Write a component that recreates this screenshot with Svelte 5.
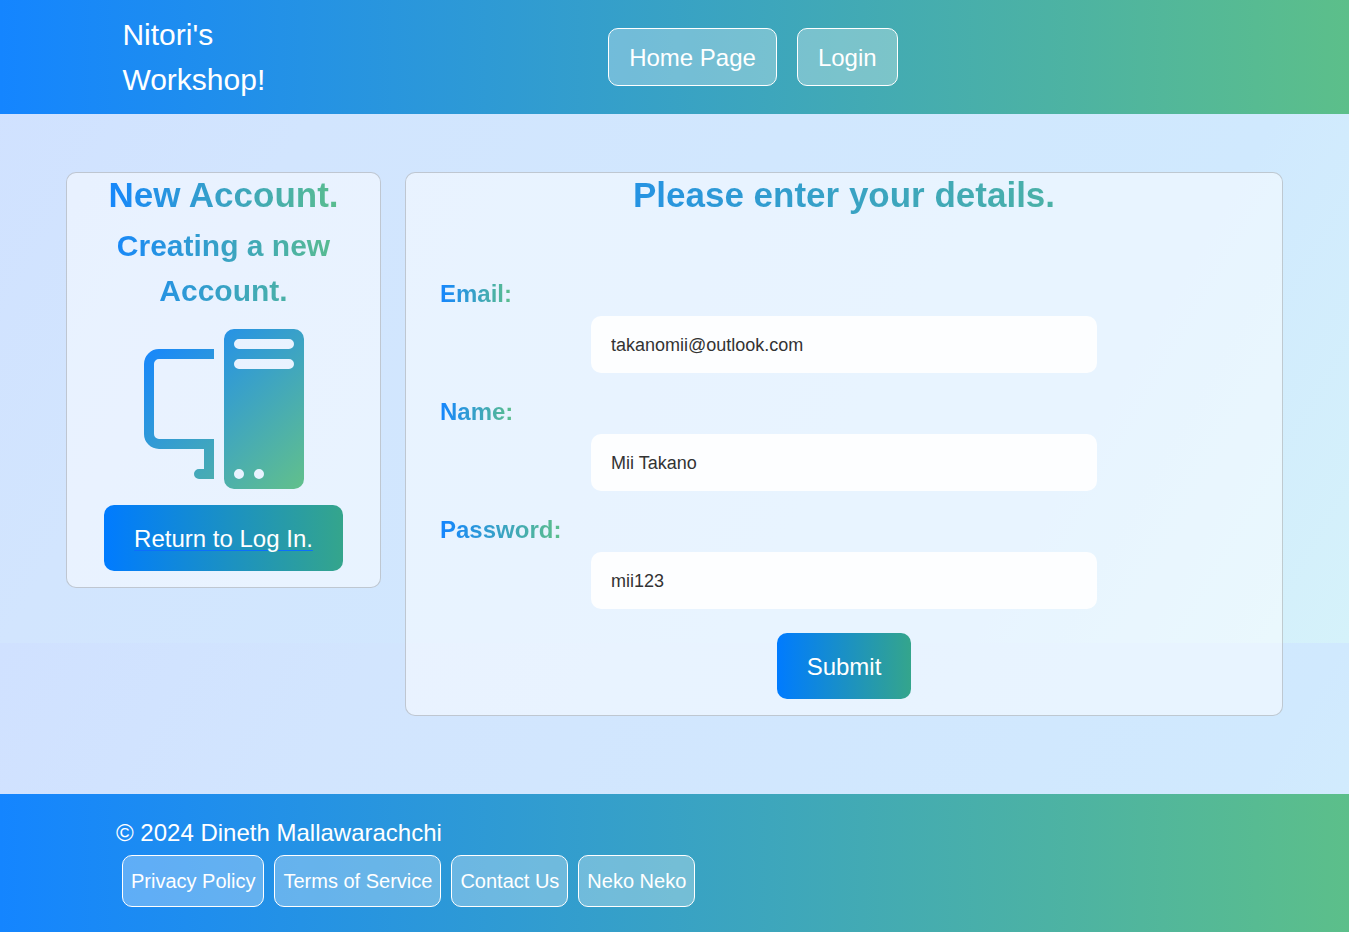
<script>
  const fields = $state([
    { id: 'email', label: 'Email:', type: 'email', value: 'takanomii@outlook.com' },
    { id: 'name', label: 'Name:', type: 'text', value: 'Mii Takano' },
    { id: 'password', label: 'Password:', type: 'text', value: 'mii123' }
  ]);
  const links = ['Privacy Policy', 'Terms of Service', 'Contact Us', 'Neko Neko'];
</script>

<div class="page">
  <header class="bar top">
    <a class="brand" href="#home">Nitori's Workshop!</a>
    <nav class="menu">
      <a class="pill large" href="#home">Home Page</a>
      <a class="pill large" href="#login">Login</a>
    </nav>
  </header>

  <main>
    <section class="card side">
      <h1 class="tint">New Account.</h1>
      <h2 class="tint">Creating a new Account.</h2>
      <svg viewBox="0 0 16 16" aria-hidden="true">
        <defs>
          <linearGradient id="device" gradientUnits="userSpaceOnUse" x1="0" y1="0" x2="16" y2="16">
            <stop offset="0" stop-color="#1485ff" />
            <stop offset="0.1" stop-color="#1a89f8" />
            <stop offset="1" stop-color="#62c08b" />
          </linearGradient>
        </defs>
        <path fill="url(#device)" fill-rule="evenodd" d="M9 0a1 1 0 0 0-1 1v14a1 1 0 0 0 1 1h6a1 1 0 0 0 1-1V1a1 1 0 0 0-1-1zm.5 1h5a.5.5 0 0 1 0 1h-5a.5.5 0 0 1 0-1m0 2h5a.5.5 0 0 1 0 1h-5a.5.5 0 0 1 0-1M9 14.5a.5.5 0 1 1 1 0 .5.5 0 0 1-1 0m2 0a.5.5 0 1 1 1 0 .5.5 0 0 1-1 0M1.5 2A1.5 1.5 0 0 0 0 3.5v7A1.5 1.5 0 0 0 1.5 12H6v2h-.5a.5.5 0 0 0 0 1H7v-4H1.5a.5.5 0 0 1-.5-.5v-7a.5.5 0 0 1 .5-.5H7V2z" />
      </svg>
      <a class="action" href="#login"><span>Return to Log In.</span></a>
    </section>

    <section class="card details">
      <h1 class="tint">Please enter your details.</h1>
      <form onsubmit={(e) => e.preventDefault()}>
        {#each fields as field (field.id)}
          <div class="field">
            <label class="tint" for={field.id}>{field.label}</label>
            <input id={field.id} type={field.type} bind:value={field.value} />
          </div>
        {/each}
        <button class="action" type="submit">Submit</button>
      </form>
    </section>
  </main>

  <footer class="bar bottom">
    <p>© 2024 Dineth Mallawarachchi</p>
    <nav class="links">
      {#each links as link}
        <a class="pill" href="#info">{link}</a>
      {/each}
    </nav>
  </footer>
</div>

<style>
  :global(body) {
    background: #fff;
  }

  .page {
    box-sizing: border-box;
    min-height: 100vh;
    display: flex;
    flex-direction: column;
    font-family: 'Liberation Sans', Arial, sans-serif;
    font-size: 24px;
    line-height: 36px;
    color: #212529;
    background: linear-gradient(120deg, #d0e1ff, #d2e5fe 22%, #d0e9fe 78%, #d5f2fa) 0 0 / 100% 643px;
  }

  .page :is(a, button, input, label, section, main, header, footer) {
    box-sizing: border-box;
  }

  .bar {
    color: #fff;
    background: linear-gradient(to right, #1485ff, #5cbf8a);
  }

  .top {
    display: grid;
    grid-template-columns: 44% 1fr;
    align-items: center;
    padding: 12px 9%;
  }

  .brand {
    width: 160px;
    padding-left: 1px;
    font-size: 30px;
    line-height: 45px;
    color: inherit;
    text-decoration: none;
  }

  .menu {
    display: flex;
    gap: 20px;
  }

  .links {
    display: flex;
    flex-wrap: wrap;
    gap: 10px;
    padding-left: 6px;
  }

  .pill {
    padding: 7px 8px;
    border: 1px solid #fff;
    border-radius: 10px;
    background: rgba(255, 255, 255, 0.3);
    color: #fff;
    font-size: 20px;
    text-decoration: none;
  }

  .pill.large {
    padding: 11px 20px 9px;
    font-size: 24px;
  }

  main {
    flex: 1;
    display: grid;
    grid-template-columns: 315fr 878fr;
    align-items: start;
    gap: 24px;
    padding: 58px 66px 78px;
  }

  .card {
    display: flex;
    flex-direction: column;
    align-items: center;
    padding: 0 34px 16px;
    border: 1px solid rgba(0, 0, 0, 0.18);
    border-radius: 10px;
    background: rgba(255, 255, 255, 0.5);
  }

  .tint {
    color: transparent;
    background: linear-gradient(to right, #1485ff, #5cbf8a);
    background-clip: text;
  }

  h1,
  h2 {
    margin: 0;
    align-self: stretch;
    text-align: center;
    font-weight: 700;
  }

  h1 {
    margin-bottom: 6px;
    font-size: 35px;
    line-height: 44px;
  }

  h2 {
    font-size: 30px;
    line-height: 45px;
  }

  svg {
    width: 160px;
    height: 160px;
    margin: 16px 0;
  }

  form {
    align-self: stretch;
    display: flex;
    flex-direction: column;
    align-items: center;
    gap: 21px;
    padding-top: 53px;
  }

  .field {
    align-self: stretch;
    display: flex;
    flex-direction: column;
    gap: 4px;
  }

  label {
    align-self: flex-start;
    font-weight: 700;
  }

  input {
    align-self: center;
    width: 506px;
    max-width: 100%;
    padding: 16px 20px 14px;
    border: 0;
    border-radius: 10px;
    background: rgba(255, 255, 255, 0.9);
    color: #333;
    font: 18px/27px 'Liberation Sans', Arial, sans-serif;
  }

  .action {
    padding: 16px 30px 14px;
    border: 0;
    border-radius: 10px;
    background: linear-gradient(to right, #007bff, #34a58c);
    color: #fff;
    font: 24px/36px 'Liberation Sans', Arial, sans-serif;
    text-decoration: none;
  }

  form .action {
    margin-top: 3px;
  }

  .action span {
    text-decoration: underline #0d6efd 1px;
    text-underline-offset: 3px;
  }

  .bottom {
    padding: 21px 116px 25px;
  }

  p {
    margin: 0 0 4px;
  }
</style>
